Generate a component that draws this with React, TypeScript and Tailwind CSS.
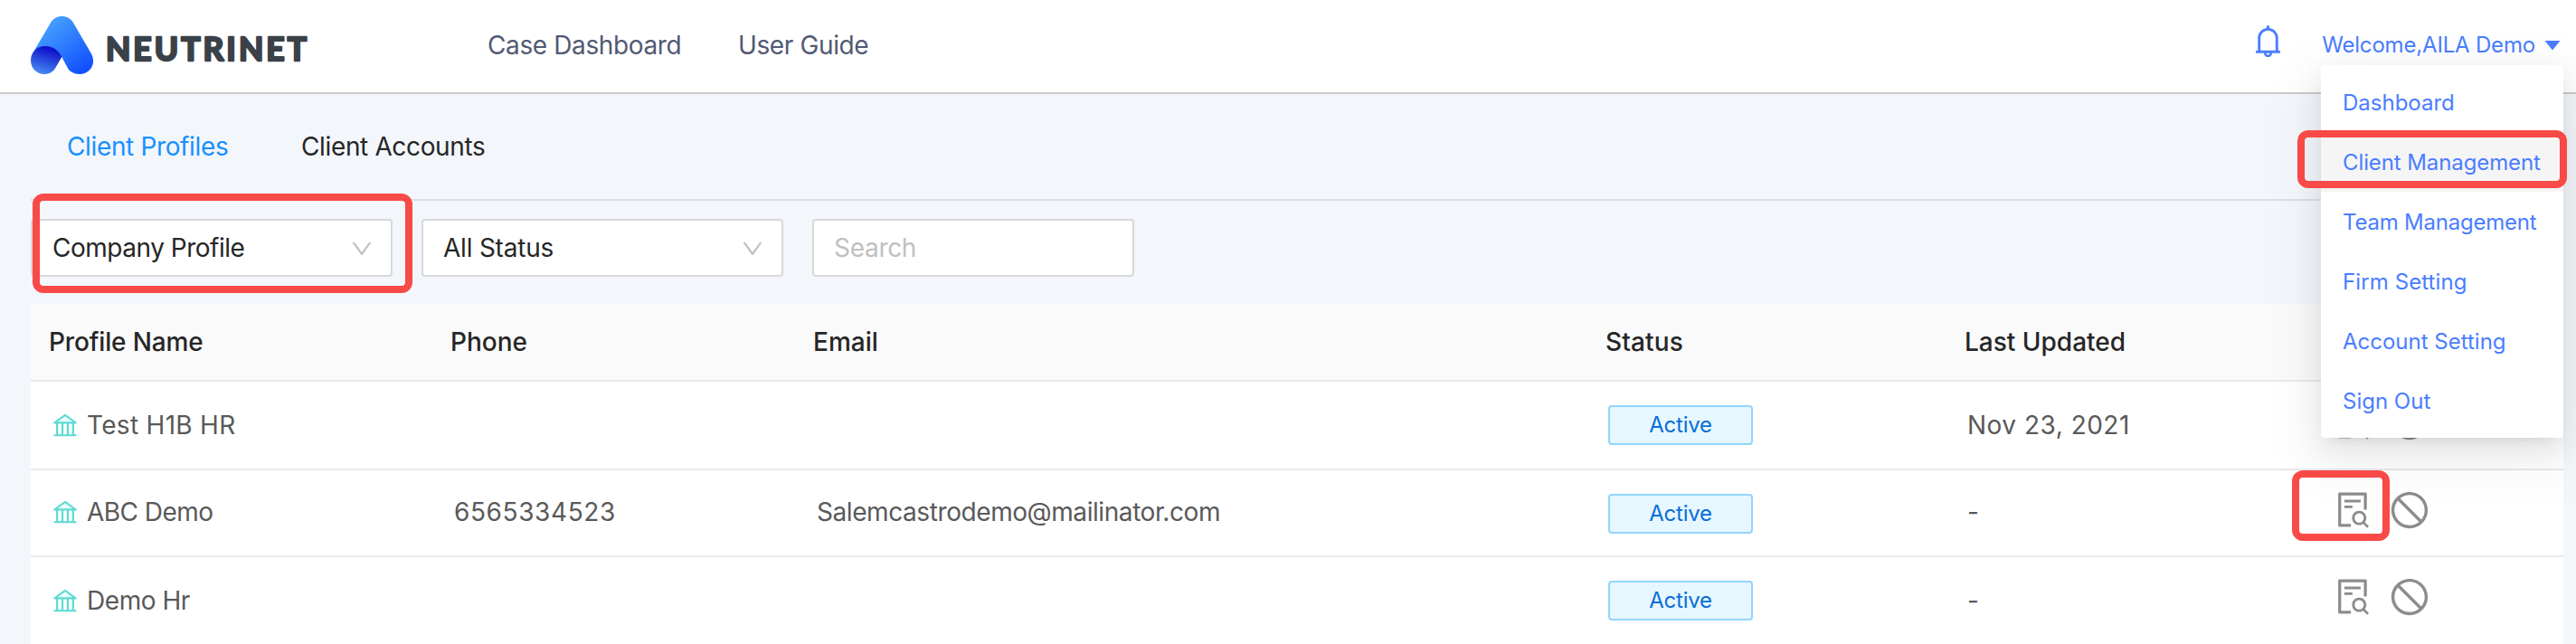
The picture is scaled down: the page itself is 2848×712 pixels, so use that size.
import React from 'react';
import clsx from 'clsx';
import { AiTwotoneBank, AiOutlineFileSearch, AiOutlineStop, AiOutlineBell, AiOutlineDown } from 'react-icons/ai';

const MENU_ITEMS = [
  { label: 'Dashboard', tracking: 'tracking-normal' },
  { label: 'Client Management', tracking: 'tracking-[-0.1px]', active: true },
  { label: 'Team Management', tracking: 'tracking-[-0.22px]' },
  { label: 'Firm Setting', tracking: 'tracking-[0.1px]' },
  { label: 'Account Setting', tracking: 'tracking-normal' },
  { label: 'Sign Out', tracking: 'tracking-normal' },
];

const PROFILES = [
  { name: 'Test H1B HR', tracking: 'tracking-[0.3px]', phone: '', email: '', updated: 'Nov 23, 2021', row: 'h-[98px]', cell: '' },
  { name: 'ABC Demo', tracking: 'tracking-[-0.55px]', phone: '6565334523', email: 'Salemcastrodemo@mailinator.com', updated: '-', row: 'h-24', cell: 'pb-1' },
  { name: 'Demo Hr', tracking: 'tracking-[-0.45px]', phone: '', email: '', updated: '-', row: 'h-[98px]', cell: '' },
];

const COLUMNS = 'grid grid-cols-[462px_402px_876px_396px_409px_1fr] border-b-2 border-[#e6eaee]';

function Logo() {
  return (
    <div className="flex items-start">
      <svg width="69" height="64" viewBox="0 0 69 64" className="shrink-0">
        <defs>
          <linearGradient id="logo-main" x1="0.25" y1="0.2" x2="0.85" y2="0.9">
            <stop offset="0" stopColor="#429bff" />
            <stop offset="1" stopColor="#1352ff" />
          </linearGradient>
          <linearGradient id="logo-fold" x1="0.65" y1="0.1" x2="0.35" y2="1">
            <stop offset="0" stopColor="#100fc9" />
            <stop offset="1" stopColor="#468bf4" />
          </linearGradient>
        </defs>
        <path d="M2 41L21.5 8C27 -2.6 42 -2.6 47.5 8L67 41.5C73 53 65 64 54 64C47.5 64 43 61 41 57.5L34.3 45L16 36Z" fill="url(#logo-main)" />
        <path d="M34.3 45C31 37.5 24 33 16 33C6.500 33 0 40.500 0 48.500C0 57 6 64 15 64C20.500 64 24.500 61.500 27 57.500Z" fill="url(#logo-fold)" />
      </svg>
      <svg width="226" height="64" className="ml-[14px] shrink-0 overflow-visible">
        <text
          x="0"
          y="48.5"
          textLength="222"
          fontFamily="Lato, sans-serif"
          fontWeight="700"
          fontSize="35.5"
          fill="#3b4149"
          stroke="#3b4149"
          strokeWidth="2.4"
          strokeLinejoin="round"
        >
          NEUTRINET
        </text>
      </svg>
    </div>
  );
}

function Select({ value, className }: { value: string; className: string }) {
  return (
    <div className={clsx('flex h-16 w-[400px] items-center justify-between rounded border-2 border-[#d9d9d9] bg-white pr-[18px] text-[#262626]', className)}>
      <span>{value}</span>
      <AiOutlineDown size={28} className="mt-0.5 text-[#bfbfbf]" />
    </div>
  );
}

export default function App() {
  return (
    <div className="relative h-[712px] w-[2848px] overflow-hidden bg-[#f3f6fb] font-['Inter',sans-serif] text-[28px] leading-10">
      {/* Top bar */}
      <header className="flex h-26 items-start border-b-2 border-[#cacaca] bg-white pt-[18px] pl-[34px]">
        <Logo />
        <nav className="ml-[196px] flex pt-3 tracking-[-0.38px] text-[#515a73]">
          <span className="w-[277px]">Case Dashboard</span>
          <span>User Guide</span>
        </nav>
        <div className="ml-auto flex items-start pr-[17px] text-[#4a7dff]">
          <AiOutlineBell size={41} className="mt-[7px]" />
          <span className="ml-[39px] pt-3 text-2xl leading-10 tracking-[-0.18px]">Welcome,AILA Demo</span>
          <svg width="18" height="11" viewBox="0 0 18 11" className="mt-[27px] ml-2.5">
            <path d="M0.500 0H17.500L9 10.500Z" fill="currentColor" />
          </svg>
        </div>
      </header>

      <main className="pr-[14px] pl-[34px]">
        {/* Tabs */}
        <div className="flex h-[118px] border-b-2 border-[#dbdfe4] pt-[38px] pl-10 tracking-[-0.36px]">
          <span className="w-[259px] text-[#1890ff]">Client Profiles</span>
          <span className="text-[#262626]">Client Accounts</span>
        </div>

        {/* Filters */}
        <div className="flex h-[114px] pt-5">
          <Select value="Company Profile" className="pl-[22px] tracking-[-0.48px]" />
          <Select value="All Status" className="ml-8 pl-[22px] tracking-[-0.22px]" />
          <div className="ml-8 flex h-16 w-[356px] items-center rounded border-2 border-[#d9d9d9] bg-white pl-[22px] tracking-[-0.3px] text-[#bfbfbf]">
            Search
          </div>
        </div>

        {/* Profiles table */}
        <div className="bg-white">
          <div className={clsx(COLUMNS, 'h-[86px] items-center bg-[#fafafa] font-medium text-[#262626]')}>
            <span className="pl-5 tracking-[-0.15px]">Profile Name</span>
            <span className="pl-0.5">Phone</span>
            <span className="pl-px">Email</span>
            <span className="pl-px tracking-[0.15px]">Status</span>
            <span className="pl-0.5">Last Updated</span>
          </div>
          {PROFILES.map((p) => (
            <div key={p.name} className={clsx(COLUMNS, 'items-start text-[#595959]', p.row)}>
              <div className={clsx('flex h-24 items-center pl-[22px]', p.tracking, p.cell)}>
                <AiTwotoneBank size={32} className="mr-2 text-[#5cdbd3] [&>path:first-child]:fill-[#e6fffb]" />
                {p.name}
              </div>
              <div className={clsx('flex h-24 items-center pl-1.5 tracking-[0.6px]', p.cell)}>{p.phone}</div>
              <div className={clsx('flex h-24 items-center pl-[5px] tracking-[-0.42px]', p.cell)}>{p.email}</div>
              <div className="flex h-24 items-center pl-1">
                <span className="flex h-11 w-40 items-center justify-center rounded border-2 border-[#91d5ff] bg-[#e6f7ff] text-2xl tracking-[-0.2px] text-[#096dd9]">
                  Active
                </span>
              </div>
              <div className={clsx('flex h-24 items-center pl-[5px] tracking-[0.5px]', p.cell)}>{p.updated}</div>
              <div className="flex h-[88px] items-center gap-4 text-[#8c8c8c]">
                <AiOutlineFileSearch size={46} />
                <AiOutlineStop size={46} />
              </div>
            </div>
          ))}
        </div>
      </main>

      {/* Account dropdown */}
      <div className="absolute top-[72px] left-[2566px] w-[268px] rounded bg-white py-2 text-2xl leading-[66px] text-[#4a7dff] shadow-[0_6px_12px_-8px_rgba(0,0,0,0.12),0_12px_32px_0_rgba(0,0,0,0.08),0_18px_56px_16px_rgba(0,0,0,0.05)]">
        {MENU_ITEMS.map((item) => (
          <div key={item.label} className={clsx('h-[66px] pt-px pl-6', item.tracking, item.active && 'bg-[#f5f5f5]')}>
            {item.label}
          </div>
        ))}
      </div>

      {/* Highlight frames */}
      <div className="absolute top-[214px] left-[36px] h-[110px] w-[420px] rounded-xl border-8 border-[#f84a46]" />
      <div className="absolute top-[144px] left-[2540px] h-16 w-[298px] rounded-xl border-8 border-[#f84a46]" />
      <div className="absolute top-[520px] left-[2534px] h-[78px] w-[108px] rounded-xl border-8 border-[#f84a46]" />
    </div>
  );
}
